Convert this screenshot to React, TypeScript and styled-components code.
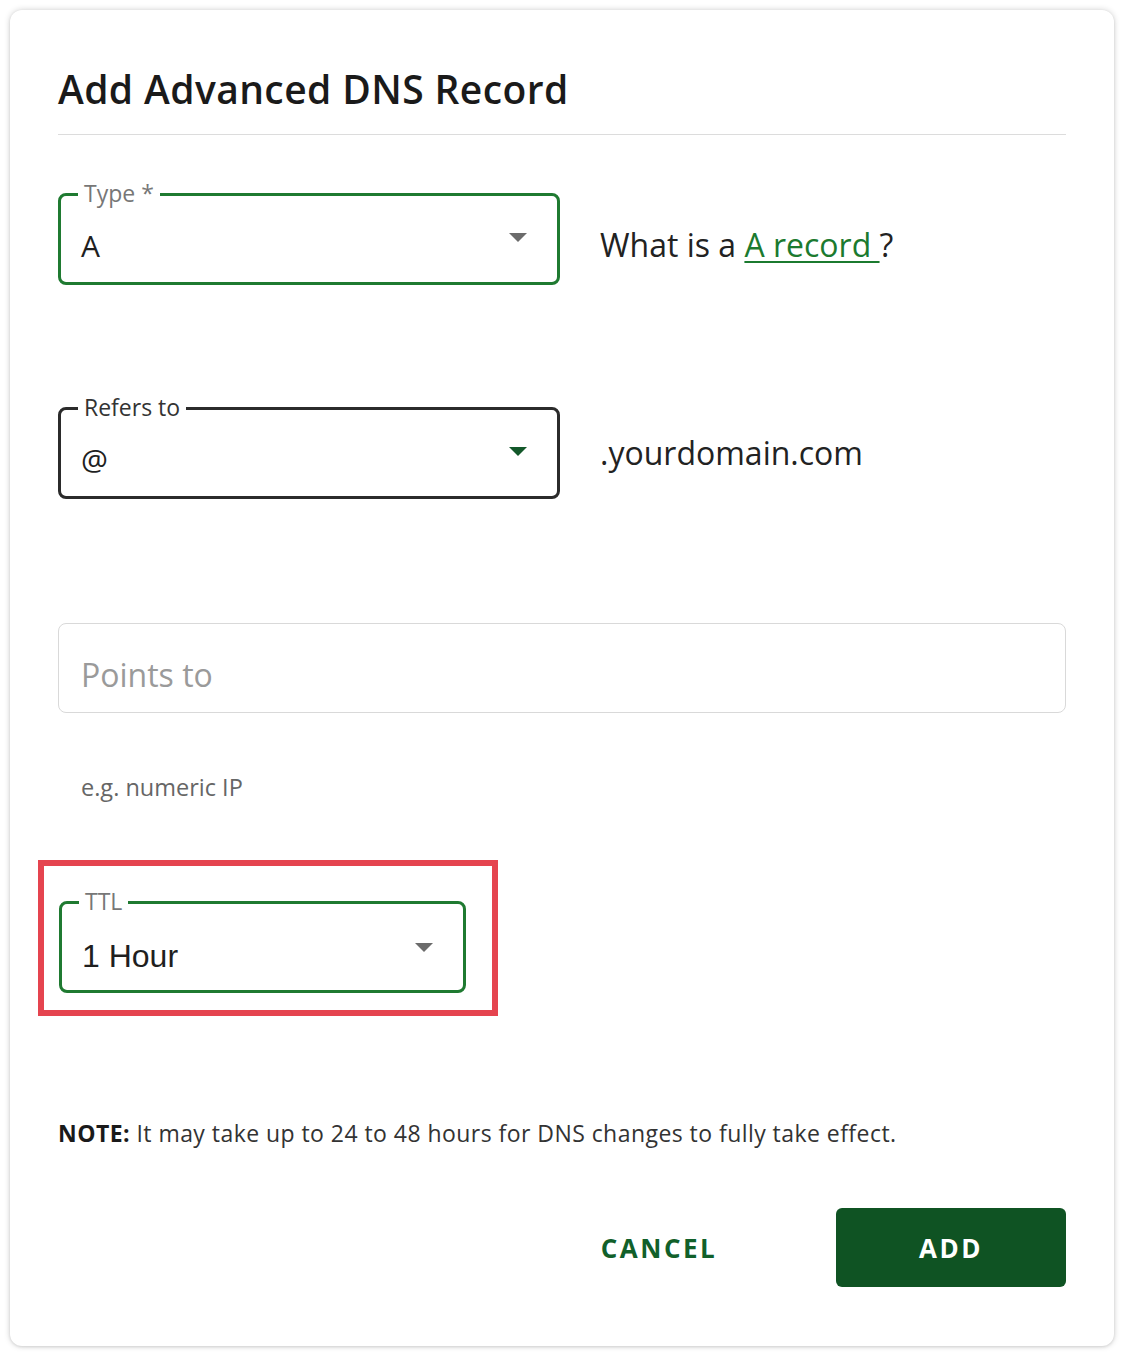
import React from "react";
import styled, { createGlobalStyle } from "styled-components";

const GlobalStyle = createGlobalStyle`
  html, body {
    margin: 0;
    padding: 0;
    background: #ffffff;
  }
  body {
    font-family: "Open Sans", "Noto Sans", sans-serif;
    color: #222;
  }
`;

const Card = styled.div`
  margin: 10px;
  width: 1104px;
  height: 1336px;
  box-sizing: border-box;
  padding: 53px 48px 59px;
  background: #fff;
  border-radius: 12px;
  box-shadow: 0 0 6px rgba(0, 0, 0, 0.18), 0 1px 3px rgba(0, 0, 0, 0.1);
  display: flex;
  flex-direction: column;
`;

const Header = styled.div`
  padding-bottom: 19px;
  border-bottom: 1px solid #dcdcdc;
`;

const Title = styled.h1`
  margin: 0;
  font-size: 39px;
  line-height: 52px;
  font-weight: 600;
  color: #1a1a1a;
  letter-spacing: 0.4px;
`;

const Row = styled.div<{ $top: number; $align: string }>`
  margin-top: ${(p) => p.$top}px;
  display: flex;
  align-items: ${(p) => p.$align};
  gap: 40px;
`;

const Field = styled.div<{ $width: number; $color: string; $padTop?: number }>`
  position: relative;
  width: ${(p) => p.$width}px;
  height: 92px;
  box-sizing: border-box;
  border: 3px solid ${(p) => p.$color};
  border-radius: 8px;
  padding: ${(p) => p.$padTop ?? 30}px 0 0 20px;
  display: flex;
  align-items: flex-start;
`;

const FieldLabel = styled.span<{ $color?: string }>`
  position: absolute;
  left: 17px;
  top: -16px;
  padding: 0 6px;
  background: #fff;
  font-size: 23px;
  line-height: 26px;
  color: ${(p) => p.$color || "#777"};
`;

const FieldValue = styled.span<{ $font?: string; $size: number }>`
  flex: 1;
  font-family: ${(p) => p.$font || `"Open Sans", sans-serif`};
  font-size: ${(p) => p.$size}px;
  line-height: 40px;
  color: #1f1f1f;
`;

const Caret = styled.span<{ $color: string }>`
  width: 0;
  height: 0;
  margin: 7px 30px 0 0;
  border-left: 9px solid transparent;
  border-right: 9px solid transparent;
  border-top: 9px solid ${(p) => p.$color};
`;

const SideText = styled.span`
  font-size: 32px;
  line-height: 42px;
  color: #222;
`;

const HelpLink = styled.a`
  color: #1b7a2f;
  text-decoration: underline;
  text-decoration-thickness: 2px;
  text-underline-offset: 4px;
`;

const TextBox = styled.div`
  margin-top: 124px;
  height: 90px;
  box-sizing: border-box;
  border: 1px solid #d9d9d9;
  border-radius: 8px;
  padding: 31px 0 0 22px;
  font-size: 32px;
  line-height: 40px;
  color: #9a9a9a;
`;

const Helper = styled.div`
  margin-top: 60px;
  padding-left: 23px;
  font-size: 23.5px;
  line-height: 28px;
  color: #666;
`;

const Highlight = styled.div`
  margin: 59px 0 0 -20px;
  width: 460px;
  height: 156px;
  box-sizing: border-box;
  border: 6px solid #e5444f;
  padding: 35px 0 0 15px;
`;

const Note = styled.p`
  margin: 102px 0 0;
  font-size: 23px;
  line-height: 30px;
  letter-spacing: 0.45px;
  color: #333;
  white-space: nowrap;

  b {
    color: #1a1a1a;
    font-weight: 700;
  }
`;

const Actions = styled.div`
  margin-top: 60px;
  display: flex;
  justify-content: flex-end;
  gap: 62px;
`;

const Button = styled.button<{ $primary?: boolean }>`
  width: 230px;
  height: 79px;
  border: none;
  border-radius: 6px;
  background: ${(p) => (p.$primary ? "#0f5323" : "transparent")};
  color: ${(p) => (p.$primary ? "#fff" : "#11602a")};
  font-family: "Open Sans", sans-serif;
  font-size: 26px;
  font-weight: 700;
  letter-spacing: 2.5px;
  cursor: pointer;
  padding: 0;
`;

export default function App() {
  return (
    <>
      <GlobalStyle />
      <Card>
        <Header>
          <Title>Add Advanced DNS Record</Title>
        </Header>

        <Row $top={58} $align="baseline">
          <Field $width={502} $color="#1f7a31">
            <FieldLabel>Type *</FieldLabel>
            <FieldValue $size={30}>A</FieldValue>
            <Caret $color="#6b6b6b" />
          </Field>
          <SideText>
            What is a <HelpLink href="#">A record </HelpLink>?
          </SideText>
        </Row>

        <Row $top={122} $align="center">
          <Field $width={502} $color="#2b2b2b">
            <FieldLabel $color="#333">Refers to</FieldLabel>
            <FieldValue $size={30}>@</FieldValue>
            <Caret $color="#13582a" />
          </Field>
          <SideText>.yourdomain.com</SideText>
        </Row>

        <TextBox>Points to</TextBox>
        <Helper>e.g. numeric IP</Helper>

        <Highlight>
          <Field $width={407} $color="#1f7a31" $padTop={32}>
            <FieldLabel>TTL</FieldLabel>
            <FieldValue $size={32} $font={`"Liberation Sans", Arial, sans-serif`}>
              1 Hour
            </FieldValue>
            <Caret $color="#6b6b6b" />
          </Field>
        </Highlight>

        <Note>
          <b>NOTE:</b> It may take up to 24 to 48 hours for DNS changes to fully take effect.
        </Note>

        <Actions>
          <Button>CANCEL</Button>
          <Button $primary>ADD</Button>
        </Actions>
      </Card>
    </>
  );
}
